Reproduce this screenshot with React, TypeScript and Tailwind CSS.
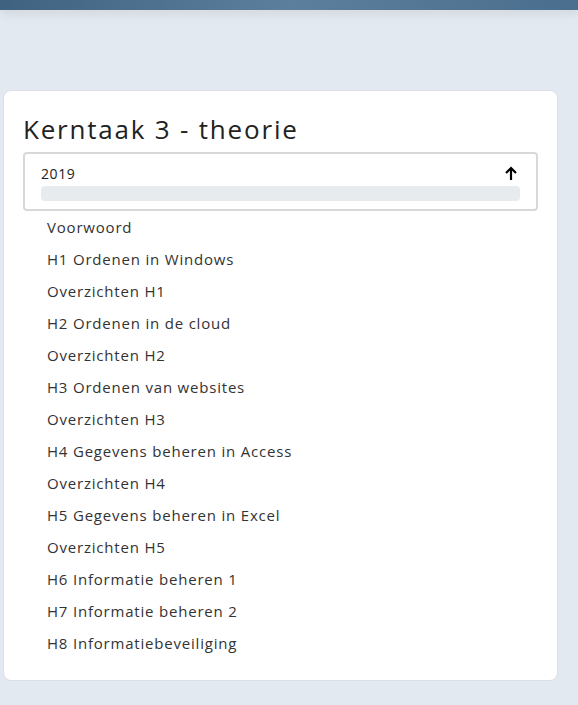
import React from 'react';

const ITEMS = [
  'Voorwoord',
  'H1 Ordenen in Windows',
  'Overzichten H1',
  'H2 Ordenen in de cloud',
  'Overzichten H2',
  'H3 Ordenen van websites',
  'Overzichten H3',
  'H4 Gegevens beheren in Access',
  'Overzichten H4',
  'H5 Gegevens beheren in Excel',
  'Overzichten H5',
  'H6 Informatie beheren 1',
  'H7 Informatie beheren 2',
  'H8 Informatiebeveiliging'
];

function App() {
  return (
    <div className="min-h-[705px] bg-[#e3e9f0] font-['Open_Sans',sans-serif]">
      <div className="h-[10px] bg-gradient-to-r from-[#3f6281] via-[#5b7f9c] to-[#4a6e8d] shadow-[0_4px_10px_rgba(0,0,0,0.08)]" />
      <div className="pt-[80px] pl-[3px] pr-[20px]">
        <div className="rounded-lg border border-[#dcdfe3] bg-white px-[19px] pt-5 pb-[21px]">
          <h1 className="text-[26px] leading-[36px] text-[#222] tracking-[1.8px]">Kerntaak 3 - theorie</h1>
          <div className="mt-[5px] rounded border-2 border-[#d8d8d8] px-4 pt-[9px] pb-[8px]">
            <div className="flex items-center justify-between">
              <span className="text-[14px] leading-[22px] text-[#222] tracking-[0.6px]">2019</span>
              <svg width="16" height="16" viewBox="0 0 16 16" fill="none" stroke="#000" strokeWidth="2.2" className="mr-px">
                <path d="M8 14V2M3 7l5-5 5 5" />
              </svg>
            </div>
            <div className="mt-[1px] h-[15px] rounded bg-[#e8ebee]" />
          </div>
          <ul className="pl-[24px]">
            {ITEMS.map((item) => (
              <li key={item} className="text-[15px] leading-[32px] text-[#333] tracking-[0.8px]">
                {item}
              </li>
            ))}
          </ul>
        </div>
      </div>
    </div>
  );
}

export default App;
